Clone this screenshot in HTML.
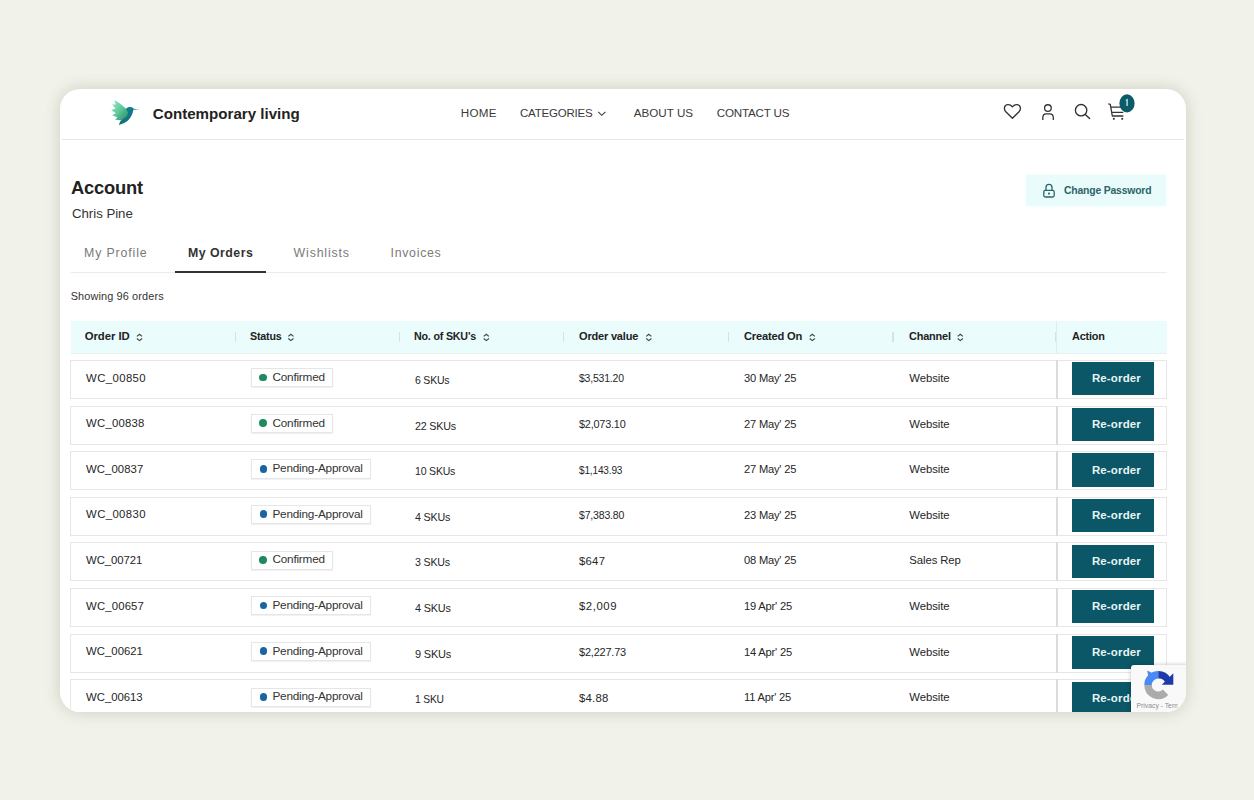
<!DOCTYPE html>
<html><head><meta charset="utf-8">
<style>
*{margin:0;padding:0;box-sizing:border-box}
html,body{width:1254px;height:800px;overflow:hidden;background:#f1f2ea;font-family:"Liberation Sans",sans-serif}
.card{position:absolute;left:60px;top:89px;width:1126px;height:623px;background:#fff;border-radius:20px;overflow:hidden;box-shadow:0 0 15px 1px rgba(70,72,45,.19)}
.a{position:absolute;white-space:nowrap;line-height:1}
</style></head><body>
<div class="card">
<div class='a' style='left:2.00px;top:49.60px;width:1122.00px;height:1.20px;background:#e6e6e6'></div>
<div class='a' style='left:966.00px;top:85.60px;width:140.00px;height:31.60px;background:#eafbfb;box-shadow:0 0 3px #eafbfb'></div>
<div class='a' style='left:11.00px;top:182.80px;width:1096.00px;height:1.20px;background:#ebebeb'></div>
<div class='a' style='left:115.30px;top:181.60px;width:90.60px;height:2.10px;background:#333'></div>
<div class='a' style='left:10.50px;top:231.80px;width:1096.70px;height:32.40px;background:#eafcfc'></div>
<div class='a' style='left:10.50px;top:263.50px;width:1096.70px;height:1.00px;background:#e6f2f2'></div>
<div class='a' style='left:174.60px;top:243.30px;width:1.30px;height:9.40px;background:#d6e3e3'></div>
<div class='a' style='left:338.90px;top:243.30px;width:1.30px;height:9.40px;background:#d6e3e3'></div>
<div class='a' style='left:503.00px;top:243.30px;width:1.30px;height:9.40px;background:#d6e3e3'></div>
<div class='a' style='left:668.00px;top:243.30px;width:1.30px;height:9.40px;background:#d6e3e3'></div>
<div class='a' style='left:832.40px;top:243.30px;width:1.30px;height:9.40px;background:#d6e3e3'></div>
<div class='a' style='left:995.00px;top:243.30px;width:1.30px;height:9.40px;background:#d6e3e3'></div>
<div class='a' style='left:996.30px;top:231.80px;width:1.20px;height:32.40px;background:#e2ecec'></div>
<div class='a' style='left:10.20px;top:271.00px;width:1096.80px;height:38.90px;border:1px solid #e6e6e6;background:#fff'></div>
<div class='a' style='left:996.20px;top:271.00px;width:1.60px;height:38.90px;background:#dcdcdc'></div>
<div class='a' style='left:191.20px;top:279.20px;width:82.00px;height:19.20px;border:1px solid #e6e6e6;background:#fff;box-shadow:0 1px 1px rgba(0,0,0,.05)'></div>
<div class='a' style='left:199.30px;top:284.50px;width:7.80px;height:7.80px;border-radius:50%;background:#1f8a5e'></div>
<div class='a' style='left:1011.60px;top:273.20px;width:82.90px;height:33.20px;background:#0b5667'></div>
<div class='a' style='left:10.20px;top:316.62px;width:1096.80px;height:38.90px;border:1px solid #e6e6e6;background:#fff'></div>
<div class='a' style='left:996.20px;top:316.62px;width:1.60px;height:38.90px;background:#dcdcdc'></div>
<div class='a' style='left:191.20px;top:324.82px;width:82.00px;height:19.20px;border:1px solid #e6e6e6;background:#fff;box-shadow:0 1px 1px rgba(0,0,0,.05)'></div>
<div class='a' style='left:199.30px;top:330.12px;width:7.80px;height:7.80px;border-radius:50%;background:#1f8a5e'></div>
<div class='a' style='left:1011.60px;top:318.82px;width:82.90px;height:33.20px;background:#0b5667'></div>
<div class='a' style='left:10.20px;top:362.24px;width:1096.80px;height:38.90px;border:1px solid #e6e6e6;background:#fff'></div>
<div class='a' style='left:996.20px;top:362.24px;width:1.60px;height:38.90px;background:#dcdcdc'></div>
<div class='a' style='left:190.90px;top:370.44px;width:119.80px;height:19.20px;border:1px solid #e6e6e6;background:#fff;box-shadow:0 1px 1px rgba(0,0,0,.05)'></div>
<div class='a' style='left:199.60px;top:375.74px;width:7.80px;height:7.80px;border-radius:50%;background:#1b64a0'></div>
<div class='a' style='left:1011.60px;top:364.44px;width:82.90px;height:33.20px;background:#0b5667'></div>
<div class='a' style='left:10.20px;top:407.86px;width:1096.80px;height:38.90px;border:1px solid #e6e6e6;background:#fff'></div>
<div class='a' style='left:996.20px;top:407.86px;width:1.60px;height:38.90px;background:#dcdcdc'></div>
<div class='a' style='left:190.90px;top:416.06px;width:119.80px;height:19.20px;border:1px solid #e6e6e6;background:#fff;box-shadow:0 1px 1px rgba(0,0,0,.05)'></div>
<div class='a' style='left:199.60px;top:421.36px;width:7.80px;height:7.80px;border-radius:50%;background:#1b64a0'></div>
<div class='a' style='left:1011.60px;top:410.06px;width:82.90px;height:33.20px;background:#0b5667'></div>
<div class='a' style='left:10.20px;top:453.48px;width:1096.80px;height:38.90px;border:1px solid #e6e6e6;background:#fff'></div>
<div class='a' style='left:996.20px;top:453.48px;width:1.60px;height:38.90px;background:#dcdcdc'></div>
<div class='a' style='left:191.20px;top:461.68px;width:82.00px;height:19.20px;border:1px solid #e6e6e6;background:#fff;box-shadow:0 1px 1px rgba(0,0,0,.05)'></div>
<div class='a' style='left:199.30px;top:466.98px;width:7.80px;height:7.80px;border-radius:50%;background:#1f8a5e'></div>
<div class='a' style='left:1011.60px;top:455.68px;width:82.90px;height:33.20px;background:#0b5667'></div>
<div class='a' style='left:10.20px;top:499.10px;width:1096.80px;height:38.90px;border:1px solid #e6e6e6;background:#fff'></div>
<div class='a' style='left:996.20px;top:499.10px;width:1.60px;height:38.90px;background:#dcdcdc'></div>
<div class='a' style='left:190.90px;top:507.30px;width:119.80px;height:19.20px;border:1px solid #e6e6e6;background:#fff;box-shadow:0 1px 1px rgba(0,0,0,.05)'></div>
<div class='a' style='left:199.60px;top:512.60px;width:7.80px;height:7.80px;border-radius:50%;background:#1b64a0'></div>
<div class='a' style='left:1011.60px;top:501.30px;width:82.90px;height:33.20px;background:#0b5667'></div>
<div class='a' style='left:10.20px;top:544.72px;width:1096.80px;height:38.90px;border:1px solid #e6e6e6;background:#fff'></div>
<div class='a' style='left:996.20px;top:544.72px;width:1.60px;height:38.90px;background:#dcdcdc'></div>
<div class='a' style='left:190.90px;top:552.92px;width:119.80px;height:19.20px;border:1px solid #e6e6e6;background:#fff;box-shadow:0 1px 1px rgba(0,0,0,.05)'></div>
<div class='a' style='left:199.60px;top:558.22px;width:7.80px;height:7.80px;border-radius:50%;background:#1b64a0'></div>
<div class='a' style='left:1011.60px;top:546.92px;width:82.90px;height:33.20px;background:#0b5667'></div>
<div class='a' style='left:10.20px;top:590.34px;width:1096.80px;height:38.90px;border:1px solid #e6e6e6;background:#fff'></div>
<div class='a' style='left:996.20px;top:590.34px;width:1.60px;height:38.90px;background:#dcdcdc'></div>
<div class='a' style='left:190.90px;top:598.54px;width:119.80px;height:19.20px;border:1px solid #e6e6e6;background:#fff;box-shadow:0 1px 1px rgba(0,0,0,.05)'></div>
<div class='a' style='left:199.60px;top:603.84px;width:7.80px;height:7.80px;border-radius:50%;background:#1b64a0'></div>
<div class='a' style='left:1011.60px;top:592.54px;width:82.90px;height:33.20px;background:#0b5667'></div>
<div class='a' style='left:92.80px;top:16.80px;font-size:15.12px;font-weight:bold;color:#222;letter-spacing:0.004px'>Contemporary living</div>
<div class='a' style='left:400.80px;top:17.95px;font-size:11.63px;color:#3a3a3a;letter-spacing:0.308px'>HOME</div>
<div class='a' style='left:459.80px;top:17.95px;font-size:11.63px;color:#3a3a3a;letter-spacing:-0.200px;transform:scaleX(0.988);transform-origin:0 0'>CATEGORIES</div>
<div class='a' style='left:573.70px;top:17.95px;font-size:11.63px;color:#3a3a3a;letter-spacing:0.026px'>ABOUT US</div>
<div class='a' style='left:656.80px;top:17.95px;font-size:11.63px;color:#3a3a3a;letter-spacing:-0.200px'>CONTACT US</div>
<div class='a' style='left:11.00px;top:88.96px;font-size:19.19px;font-weight:bold;color:#222;letter-spacing:-0.200px;transform:scaleX(0.954);transform-origin:0 0'>Account</div>
<div class='a' style='left:12.00px;top:118.10px;font-size:13.23px;color:#333;letter-spacing:-0.020px'>Chris Pine</div>
<div class='a' style='left:1004.10px;top:95.15px;font-size:11.63px;font-weight:bold;color:#2a6468;letter-spacing:-0.200px;transform:scaleX(0.893);transform-origin:0 0'>Change Password</div>
<div class='a' style='left:24.00px;top:158.24px;font-size:12.35px;color:#7a7a7a;letter-spacing:0.858px'>My Profile</div>
<div class='a' style='left:128.00px;top:158.24px;font-size:12.35px;font-weight:bold;color:#333;letter-spacing:0.467px'>My Orders</div>
<div class='a' style='left:233.60px;top:158.24px;font-size:12.35px;color:#7a7a7a;letter-spacing:0.837px'>Wishlists</div>
<div class='a' style='left:330.50px;top:158.24px;font-size:12.35px;color:#7a7a7a;letter-spacing:0.715px'>Invoices</div>
<div class='a' style='left:10.70px;top:201.77px;font-size:10.90px;color:#333;letter-spacing:0.130px'>Showing 96 orders</div>
<div class='a' style='left:24.70px;top:242.40px;font-size:11.34px;font-weight:bold;color:#222;letter-spacing:-0.047px'>Order ID</div>
<div class='a' style='left:190.10px;top:242.40px;font-size:11.34px;font-weight:bold;color:#222;letter-spacing:-0.200px;transform:scaleX(0.943);transform-origin:0 0'>Status</div>
<div class='a' style='left:354.20px;top:242.40px;font-size:11.34px;font-weight:bold;color:#222;letter-spacing:-0.200px;transform:scaleX(0.943);transform-origin:0 0'>No. of SKU's</div>
<div class='a' style='left:519.00px;top:242.40px;font-size:11.34px;font-weight:bold;color:#222;letter-spacing:-0.200px;transform:scaleX(0.973);transform-origin:0 0'>Order value</div>
<div class='a' style='left:683.70px;top:242.40px;font-size:11.34px;font-weight:bold;color:#222;letter-spacing:-0.200px;transform:scaleX(0.982);transform-origin:0 0'>Created On</div>
<div class='a' style='left:848.70px;top:242.40px;font-size:11.34px;font-weight:bold;color:#222;letter-spacing:-0.200px;transform:scaleX(0.965);transform-origin:0 0'>Channel</div>
<div class='a' style='left:1012.20px;top:242.40px;font-size:11.34px;font-weight:bold;color:#222;letter-spacing:-0.200px;transform:scaleX(0.961);transform-origin:0 0'>Action</div>
<div class='a' style='left:26.10px;top:283.50px;font-size:11.34px;color:#262626;letter-spacing:0.402px'>WC_00850</div>
<div class='a' style='left:212.40px;top:281.93px;font-size:11.77px;color:#333;letter-spacing:-0.198px'>Confirmed</div>
<div class='a' style='left:355.00px;top:286.00px;font-size:11.34px;color:#262626;letter-spacing:-0.200px;transform:scaleX(0.925);transform-origin:0 0'>6 SKUs</div>
<div class='a' style='left:518.90px;top:284.30px;font-size:11.34px;color:#262626;letter-spacing:-0.200px;transform:scaleX(0.922);transform-origin:0 0'>$3,531.20</div>
<div class='a' style='left:684.10px;top:283.90px;font-size:11.34px;color:#262626;letter-spacing:-0.200px;transform:scaleX(0.984);transform-origin:0 0'>30 May' 25</div>
<div class='a' style='left:849.30px;top:283.90px;font-size:11.34px;color:#262626;letter-spacing:-0.086px'>Website</div>
<div class='a' style='left:1031.90px;top:284.28px;font-size:11.48px;font-weight:bold;color:#e6f5f5;letter-spacing:0.158px'>Re-order</div>
<div class='a' style='left:26.10px;top:329.12px;font-size:11.34px;color:#262626;letter-spacing:0.230px'>WC_00838</div>
<div class='a' style='left:212.40px;top:327.55px;font-size:11.77px;color:#333;letter-spacing:-0.198px'>Confirmed</div>
<div class='a' style='left:355.00px;top:331.62px;font-size:11.34px;color:#262626;letter-spacing:-0.200px;transform:scaleX(0.947);transform-origin:0 0'>22 SKUs</div>
<div class='a' style='left:518.90px;top:329.92px;font-size:11.34px;color:#262626;letter-spacing:-0.200px;transform:scaleX(0.957);transform-origin:0 0'>$2,073.10</div>
<div class='a' style='left:684.10px;top:329.52px;font-size:11.34px;color:#262626;letter-spacing:-0.200px;transform:scaleX(0.984);transform-origin:0 0'>27 May' 25</div>
<div class='a' style='left:849.30px;top:329.52px;font-size:11.34px;color:#262626;letter-spacing:-0.086px'>Website</div>
<div class='a' style='left:1031.90px;top:329.90px;font-size:11.48px;font-weight:bold;color:#e6f5f5;letter-spacing:0.158px'>Re-order</div>
<div class='a' style='left:26.10px;top:374.74px;font-size:11.34px;color:#262626;letter-spacing:0.073px'>WC_00837</div>
<div class='a' style='left:212.40px;top:373.17px;font-size:11.77px;color:#333;letter-spacing:-0.200px'>Pending-Approval</div>
<div class='a' style='left:355.00px;top:377.24px;font-size:11.34px;color:#262626;letter-spacing:-0.200px;transform:scaleX(0.928);transform-origin:0 0'>10 SKUs</div>
<div class='a' style='left:518.90px;top:375.54px;font-size:11.34px;color:#262626;letter-spacing:-0.200px;transform:scaleX(0.891);transform-origin:0 0'>$1,143.93</div>
<div class='a' style='left:684.10px;top:375.14px;font-size:11.34px;color:#262626;letter-spacing:-0.200px;transform:scaleX(0.984);transform-origin:0 0'>27 May' 25</div>
<div class='a' style='left:849.30px;top:375.14px;font-size:11.34px;color:#262626;letter-spacing:-0.086px'>Website</div>
<div class='a' style='left:1031.90px;top:375.52px;font-size:11.48px;font-weight:bold;color:#e6f5f5;letter-spacing:0.158px'>Re-order</div>
<div class='a' style='left:26.10px;top:420.36px;font-size:11.34px;color:#262626;letter-spacing:0.387px'>WC_00830</div>
<div class='a' style='left:212.40px;top:418.79px;font-size:11.77px;color:#333;letter-spacing:-0.200px'>Pending-Approval</div>
<div class='a' style='left:355.00px;top:422.86px;font-size:11.34px;color:#262626;letter-spacing:-0.200px;transform:scaleX(0.946);transform-origin:0 0'>4 SKUs</div>
<div class='a' style='left:518.90px;top:421.16px;font-size:11.34px;color:#262626;letter-spacing:-0.200px;transform:scaleX(0.928);transform-origin:0 0'>$7,383.80</div>
<div class='a' style='left:684.10px;top:420.76px;font-size:11.34px;color:#262626;letter-spacing:-0.200px;transform:scaleX(0.984);transform-origin:0 0'>23 May' 25</div>
<div class='a' style='left:849.30px;top:420.76px;font-size:11.34px;color:#262626;letter-spacing:-0.086px'>Website</div>
<div class='a' style='left:1031.90px;top:421.14px;font-size:11.48px;font-weight:bold;color:#e6f5f5;letter-spacing:0.158px'>Re-order</div>
<div class='a' style='left:26.10px;top:465.98px;font-size:11.34px;color:#262626;letter-spacing:-0.070px'>WC_00721</div>
<div class='a' style='left:212.40px;top:464.41px;font-size:11.77px;color:#333;letter-spacing:-0.198px'>Confirmed</div>
<div class='a' style='left:355.00px;top:468.48px;font-size:11.34px;color:#262626;letter-spacing:-0.200px;transform:scaleX(0.941);transform-origin:0 0'>3 SKUs</div>
<div class='a' style='left:518.90px;top:466.78px;font-size:11.34px;color:#262626;letter-spacing:0.299px'>$647</div>
<div class='a' style='left:684.10px;top:466.38px;font-size:11.34px;color:#262626;letter-spacing:-0.200px;transform:scaleX(0.984);transform-origin:0 0'>08 May' 25</div>
<div class='a' style='left:849.30px;top:466.38px;font-size:11.34px;color:#262626;letter-spacing:-0.086px'>Sales Rep</div>
<div class='a' style='left:1031.90px;top:466.76px;font-size:11.48px;font-weight:bold;color:#e6f5f5;letter-spacing:0.158px'>Re-order</div>
<div class='a' style='left:26.10px;top:511.60px;font-size:11.34px;color:#262626;letter-spacing:0.159px'>WC_00657</div>
<div class='a' style='left:212.40px;top:510.03px;font-size:11.77px;color:#333;letter-spacing:-0.200px'>Pending-Approval</div>
<div class='a' style='left:355.00px;top:514.10px;font-size:11.34px;color:#262626;letter-spacing:-0.200px;transform:scaleX(0.957);transform-origin:0 0'>4 SKUs</div>
<div class='a' style='left:518.90px;top:512.40px;font-size:11.34px;color:#262626;letter-spacing:0.589px'>$2,009</div>
<div class='a' style='left:684.10px;top:512.00px;font-size:11.34px;color:#262626;letter-spacing:-0.200px;transform:scaleX(0.984);transform-origin:0 0'>19 Apr' 25</div>
<div class='a' style='left:849.30px;top:512.00px;font-size:11.34px;color:#262626;letter-spacing:-0.086px'>Website</div>
<div class='a' style='left:1031.90px;top:512.38px;font-size:11.48px;font-weight:bold;color:#e6f5f5;letter-spacing:0.158px'>Re-order</div>
<div class='a' style='left:26.10px;top:557.22px;font-size:11.34px;color:#262626;letter-spacing:0.016px'>WC_00621</div>
<div class='a' style='left:212.40px;top:555.65px;font-size:11.77px;color:#333;letter-spacing:-0.200px'>Pending-Approval</div>
<div class='a' style='left:355.00px;top:559.72px;font-size:11.34px;color:#262626;letter-spacing:-0.200px;transform:scaleX(0.968);transform-origin:0 0'>9 SKUs</div>
<div class='a' style='left:518.90px;top:558.02px;font-size:11.34px;color:#262626;letter-spacing:-0.200px;transform:scaleX(0.967);transform-origin:0 0'>$2,227.73</div>
<div class='a' style='left:684.10px;top:557.62px;font-size:11.34px;color:#262626;letter-spacing:-0.200px;transform:scaleX(0.984);transform-origin:0 0'>14 Apr' 25</div>
<div class='a' style='left:849.30px;top:557.62px;font-size:11.34px;color:#262626;letter-spacing:-0.086px'>Website</div>
<div class='a' style='left:1031.90px;top:558.00px;font-size:11.48px;font-weight:bold;color:#e6f5f5;letter-spacing:0.158px'>Re-order</div>
<div class='a' style='left:26.10px;top:602.84px;font-size:11.34px;color:#262626;letter-spacing:-0.041px'>WC_00613</div>
<div class='a' style='left:212.40px;top:601.27px;font-size:11.77px;color:#333;letter-spacing:-0.200px'>Pending-Approval</div>
<div class='a' style='left:355.00px;top:605.34px;font-size:11.34px;color:#262626;letter-spacing:-0.200px;transform:scaleX(0.908);transform-origin:0 0'>1 SKU</div>
<div class='a' style='left:518.90px;top:603.64px;font-size:11.34px;color:#262626;letter-spacing:0.285px'>$4.88</div>
<div class='a' style='left:684.10px;top:603.24px;font-size:11.34px;color:#262626;letter-spacing:-0.200px;transform:scaleX(0.984);transform-origin:0 0'>11 Apr' 25</div>
<div class='a' style='left:849.30px;top:603.24px;font-size:11.34px;color:#262626;letter-spacing:-0.086px'>Website</div>
<div class='a' style='left:1031.90px;top:603.62px;font-size:11.48px;font-weight:bold;color:#e6f5f5;letter-spacing:0.158px'>Re-order</div>
<svg class="a" style="left:0;top:0" width="1126" height="624" viewBox="60 89 1126 624">
<defs>
<linearGradient id="wg" x1="0.1" y1="0.1" x2="0.9" y2="0.9"><stop offset="0" stop-color="#90e4c2"/><stop offset="0.5" stop-color="#62c79b"/><stop offset="1" stop-color="#2a9670"/></linearGradient>
<linearGradient id="bg" x1="0" y1="0" x2="0" y2="1"><stop offset="0" stop-color="#167e92"/><stop offset="1" stop-color="#106e7c"/></linearGradient>
</defs>
<g transform="translate(110 99)">
<path d="M15.5 13.8 L16.2 9.6 C17.8 8.2 20 7.8 21.8 8.3 L23.6 9.6 L24.6 10.1 L23.6 10.9 L23.2 11.6 C22.8 15 21 18.6 18.2 21.2 C16 23.2 12.8 24.8 8.8 25.9 L10.2 22.6 L12.8 19.2 Z" fill="url(#bg)"/>
<path d="M23.4 9.7 L29.8 10.3 L23.4 10.9 Z" fill="#6f9fa6"/>
<path d="M4.4 1 L10 4.6 L15.8 9.4 L18.2 13.6 L16.8 17.6 L11.4 21.2 L5.2 20.8 L7.4 18.2 L2.2 16.6 L5.8 14 L1.2 11.2 L5.6 9.4 L2 5.6 L5.6 5.6 Z" fill="url(#wg)"/>
</g>
<path d="M598.2 111.8 L601.8 115.3 L605.4 111.8" fill="none" stroke="#3a3a3a" stroke-width="1.05"/>
<path d="M1012.4 118.3 L1005.8 111.7 C1003.4 109.3 1004.2 104.9 1007.8 104.7 C1009.9 104.6 1011.4 105.6 1012.4 106.9 C1013.4 105.6 1014.9 104.6 1017 104.7 C1020.6 104.9 1021.4 109.3 1019 111.7 Z" fill="none" stroke="#333" stroke-width="1.35" stroke-linejoin="round"/>
<circle cx="1047.9" cy="108.1" r="3.35" fill="none" stroke="#333" stroke-width="1.3"/>
<path d="M1042.8 120 L1042.8 117.6 C1042.8 115.4 1044.4 113.9 1046.4 113.9 L1049.6 113.9 C1051.6 113.9 1053.3 115.4 1053.3 117.6 L1053.3 120" fill="none" stroke="#333" stroke-width="1.3"/>
<circle cx="1081.1" cy="110.2" r="5.7" fill="none" stroke="#333" stroke-width="1.35"/>
<path d="M1085.3 114.4 L1089.6 118.6" stroke="#333" stroke-width="1.45" stroke-linecap="round"/>
<path d="M1108.3 103.9 L1110.3 104.3 L1112.3 116 L1123.3 116 M1111.3 107.1 L1121 107.1 M1112 112.4 L1123.3 112.4" fill="none" stroke="#333" stroke-width="1.3" stroke-linejoin="round"/>
<rect x="1112.9" y="117.9" width="1.8" height="1.8" fill="#333"/><rect x="1121.3" y="117.9" width="1.8" height="1.8" fill="#333"/>
<ellipse cx="1127" cy="103.4" rx="7.6" ry="9.1" fill="#0c5b69"/>
<path d="M1125.9 100.6 L1127.1 99.8 L1127.1 105.9" fill="none" stroke="#a9dfdf" stroke-width="1.5"/>
<path d="M1046 190.4 L1046 187.2 C1046 185.2 1047.2 184.3 1049 184.3 C1050.8 184.3 1052 185.2 1052 187.2 L1052 190.4" fill="none" stroke="#2a6468" stroke-width="1.3"/>
<rect x="1043.8" y="190.4" width="10.4" height="6.6" rx="1.5" fill="none" stroke="#2a6468" stroke-width="1.3"/>
<circle cx="1049" cy="193.6" r="1.05" fill="#2a6468"/>
<path d="M136.90 336.4 L139.50 334.3 L142.10 336.4 M136.90 338.5 L139.50 340.6 L142.10 338.5" fill="none" stroke="#3a4646" stroke-width="1.15"/>
<path d="M288.30 336.4 L290.90 334.3 L293.50 336.4 M288.30 338.5 L290.90 340.6 L293.50 338.5" fill="none" stroke="#3a4646" stroke-width="1.15"/>
<path d="M483.70 336.4 L486.30 334.3 L488.90 336.4 M483.70 338.5 L486.30 340.6 L488.90 338.5" fill="none" stroke="#3a4646" stroke-width="1.15"/>
<path d="M646.20 336.4 L648.80 334.3 L651.40 336.4 M646.20 338.5 L648.80 340.6 L651.40 338.5" fill="none" stroke="#3a4646" stroke-width="1.15"/>
<path d="M809.70 336.4 L812.30 334.3 L814.90 336.4 M809.70 338.5 L812.30 340.6 L814.90 338.5" fill="none" stroke="#3a4646" stroke-width="1.15"/>
<path d="M957.70 336.4 L960.30 334.3 L962.90 336.4 M957.70 338.5 L960.30 340.6 L962.90 338.5" fill="none" stroke="#3a4646" stroke-width="1.15"/>
</svg>
<div class="a" style="left:1071px;top:576px;width:60px;height:50px;background:#f9f9f9;border-radius:3px;box-shadow:0 0 4px rgba(0,0,0,.25)"></div>
<svg class="a" style="left:0;top:0" width="1126" height="624" viewBox="60 89 1126 624">
<path d="M1144.3 685 A14 14 0 0 1 1158.3 671 L1158.3 678.5 A6.5 6.5 0 0 0 1151.8 685 Z" fill="#4a8af4"/>
<path d="M1147.2 670.6 L1152.6 673.2 L1148.4 677.4 Z" fill="#4a8af4"/>
<path d="M1158.3 671 A14 14 0 0 1 1170.5 678 L1165 682 A6.5 6.5 0 0 0 1158.3 678.5 Z" fill="#1c3aa9"/>
<path d="M1173.3 673.2 L1173.3 684.8 L1161.8 684.8 Z" fill="#1c3aa9"/>
<path d="M1144.3 685 A14 14 0 0 0 1168.2 694.9 L1162.9 689.6 A6.5 6.5 0 0 1 1151.8 685 Z" fill="#ababab"/>
<clipPath id="rc"><rect x="1131" y="660" width="46.5" height="60"/></clipPath><text x="1136.5" y="708.4" font-family="Liberation Sans" font-size="6.8" fill="#8c8c8c" clip-path="url(#rc)">Privacy - Terms</text>
</svg>
</div>
</body></html>
